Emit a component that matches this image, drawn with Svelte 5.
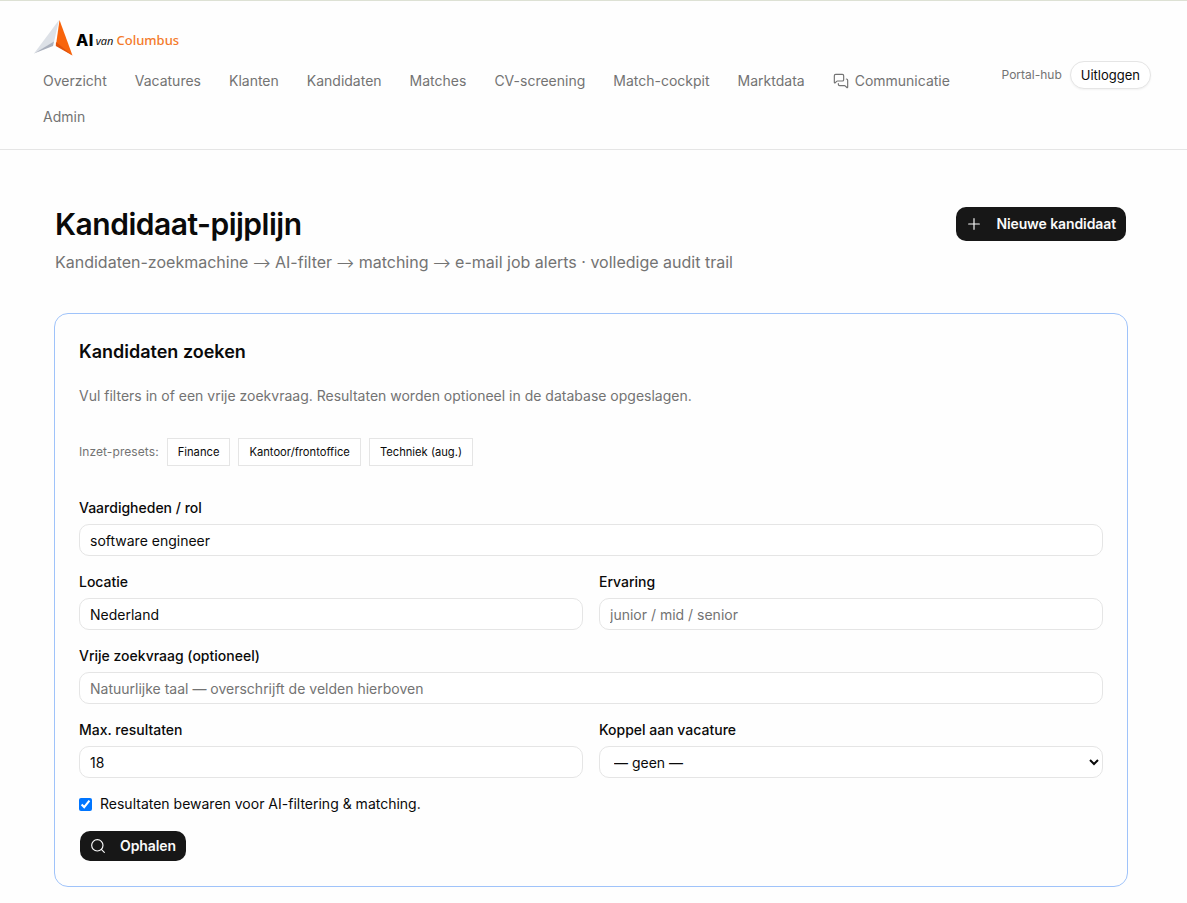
<script>
  const navItems = [
    'Overzicht',
    'Vacatures',
    'Klanten',
    'Kandidaten',
    'Matches',
    'CV-screening',
    'Match-cockpit',
    'Marktdata',
    'Communicatie',
    'Admin'
  ];

  const steps = [
    'Kandidaten-zoekmachine',
    'AI-filter',
    'matching',
    'e-mail job alerts · volledige audit trail'
  ];

  const presets = [
    { label: 'Finance', skills: 'finance' },
    { label: 'Kantoor/frontoffice', skills: 'frontoffice' },
    { label: 'Techniek (aug.)', skills: 'techniek' }
  ];

  let skills = 'software engineer';
  let location = 'Nederland';
  let experience = '';
  let query = '';
  let limit = 18;
  let vacancy = '';
  let persist = true;

  function applyPreset(preset) {
    skills = preset.skills;
  }
</script>

<header class="topbar">
  <div class="topbar-main">
    <a class="logo" href="#home">
      <svg width="40" height="36" viewBox="0 0 40 36">
        <path d="M26 0 1 33.500 21 22z" fill="#dde1e7" />
        <path d="M1 33.500 21 21.500 20 26z" fill="#a9afbc" />
        <path d="M26.500 0 39.500 35.500 23 25z" fill="#f8640c" />
        <path d="M23 22 39.500 35.500 22.800 26z" fill="#e0530c" />
      </svg>
      <span class="logo-ai">AI</span>
      <span class="logo-van">van</span>
      <span class="logo-name">Columbus</span>
    </a>
    <nav class="nav">
      {#each navItems as item}
        <a class="nav-link" href="#{item.toLowerCase()}">
          {#if item === 'Communicatie'}
            <svg class="icon" width="16" height="16" viewBox="0 0 24 24">
              <path d="M16 10a2 2 0 0 1-2 2H6.828a2 2 0 0 0-1.414.586l-2.202 2.202A.71.71 0 0 1 2 14.286V4a2 2 0 0 1 2-2h10a2 2 0 0 1 2 2z" />
              <path d="M20 9a2 2 0 0 1 2 2v10.286a.71.71 0 0 1-1.212.502l-2.202-2.202A2 2 0 0 0 17.172 19H10a2 2 0 0 1-2-2v-1" />
            </svg>
          {/if}
          {item}
        </a>
      {/each}
    </nav>
  </div>
  <div class="account">
    <a class="portal" href="#portal">Portal-hub</a>
    <button class="logout">Uitloggen</button>
  </div>
</header>

<main class="page">
  <div class="page-head">
    <div>
      <h1>Kandidaat-pijplijn</h1>
      <p class="subtitle">
        {#each steps as step, i}{#if i > 0}{' '}<span class="arrow">→</span>{' '}{/if}{step}{/each}
      </p>
    </div>
    <button class="btn-dark btn-new">
      <svg class="icon" width="16" height="16" viewBox="0 0 24 24"><path d="M4 12h16M12 4v16" /></svg>
      Nieuwe kandidaat
    </button>
  </div>

  <section class="card">
    <h2>Kandidaten zoeken</h2>
    <p class="card-text">Vul filters in of een vrije zoekvraag. Resultaten worden optioneel in de database opgeslagen.</p>

    <div class="presets">
      <span>Inzet-presets:</span>
      {#each presets as preset}
        <button class="preset" on:click={() => applyPreset(preset)}>{preset.label}</button>
      {/each}
    </div>

    <form class="form" on:submit|preventDefault>
      <label class="field wide">
        <span>Vaardigheden / rol</span>
        <input type="text" bind:value={skills} />
      </label>
      <label class="field">
        <span>Locatie</span>
        <input type="text" bind:value={location} />
      </label>
      <label class="field">
        <span>Ervaring</span>
        <input type="text" placeholder="junior / mid / senior" bind:value={experience} />
      </label>
      <label class="field wide">
        <span>Vrije zoekvraag (optioneel)</span>
        <input type="text" placeholder="Natuurlijke taal — overschrijft de velden hierboven" bind:value={query} />
      </label>
      <label class="field">
        <span>Max. resultaten</span>
        <input type="number" min="1" bind:value={limit} />
      </label>
      <label class="field">
        <span>Koppel aan vacature</span>
        <select bind:value={vacancy}>
          <option value="">— geen —</option>
        </select>
      </label>
      <label class="check wide">
        <input type="checkbox" bind:checked={persist} />
        <span>Resultaten bewaren voor AI-filtering &amp; matching.</span>
      </label>
      <button class="btn-dark btn-search" type="submit">
        <svg class="icon" width="16" height="16" viewBox="0 0 24 24"><circle cx="11" cy="11" r="8.500" /><path d="m21.500 21.500-4.500-4.500" /></svg>
        Ophalen
      </button>
    </form>
  </section>
</main>

<style>
  :global(body) {
    background: #fefefe;
    color: #0a0a0a;
    font-family: Inter, sans-serif;
    font-size: 14px;
    line-height: 20px;
  }
  a {
    color: inherit;
    text-decoration: none;
  }
  button,
  input,
  select {
    font: inherit;
    color: inherit;
  }
  .icon {
    fill: none;
    stroke: currentColor;
    stroke-width: 1.75;
    stroke-linecap: round;
    stroke-linejoin: round;
    flex-shrink: 0;
  }

  .topbar {
    display: flex;
    justify-content: space-between;
    align-items: center;
    box-sizing: border-box;
    height: 150px;
    padding: 0 36px 0 33px;
    border-top: 1px solid #dde1d4;
    border-bottom: 1px solid #e5e5e5;
    background: #fefefe;
  }
  .topbar-main {
    width: 950px;
  }
  .logo {
    display: flex;
    align-items: center;
    height: 40px;
    line-height: 20px;
  }
  .logo-ai {
    margin: 4px 0 0 3px;
    font-size: 16px;
    font-weight: 800;
    letter-spacing: 0.4px;
    color: #000;
  }
  .logo-van {
    margin: 6px 0 0 2px;
    font-family: "Noto Sans", sans-serif;
    font-size: 11px;
    font-style: italic;
    color: #111;
  }
  .logo-name {
    margin: 4px 0 0 3px;
    font-family: "Noto Sans", sans-serif;
    font-size: 13px;
    font-weight: 500;
    color: #f47a2a;
  }
  .nav {
    display: flex;
    flex-wrap: wrap;
    gap: 4px 8px;
    margin-top: 7px;
  }
  .nav-link {
    display: flex;
    align-items: center;
    gap: 6px;
    padding: 6px 10px;
    color: #737373;
  }
  .account {
    display: flex;
    align-items: center;
    gap: 8px;
  }
  .portal {
    font-size: 12px;
    color: #737373;
  }
  .logout {
    box-sizing: border-box;
    height: 28px;
    padding: 0 10px;
    border: 1px solid #e5e5e5;
    border-radius: 14px;
    background: #fff;
    font-size: 13px;
    box-shadow: 0 1px 2px rgba(0, 0, 0, 0.05);
  }

  .page {
    padding: 54px 59px 16px 54px;
  }
  .page-head {
    display: flex;
    justify-content: space-between;
    align-items: flex-start;
    padding: 0 2px 0 1px;
    margin-bottom: 39px;
  }
  h1 {
    margin: 0;
    font-size: 30px;
    line-height: 40px;
    font-weight: 600;
    letter-spacing: -0.5px;
  }
  .subtitle {
    margin: 6px 0 0;
    font-size: 16px;
    line-height: 24px;
    color: #737373;
  }
  .arrow {
    font-family: "DejaVu Sans", sans-serif;
    font-size: 21px;
    font-weight: 200;
    line-height: 0;
    vertical-align: -2px;
  }
  .btn-dark {
    display: flex;
    align-items: center;
    justify-content: space-between;
    box-sizing: border-box;
    padding: 0 10px;
    border: 0;
    border-radius: 10px;
    background: #171717;
    color: #fafafa;
    font-weight: 600;
    letter-spacing: -0.1px;
  }
  .btn-new {
    width: 170px;
    height: 34px;
    margin-top: 3px;
  }
  .btn-search {
    width: 106px;
    height: 30px;
    margin: 1px 0 0 1px;
  }

  .card {
    box-sizing: border-box;
    height: 574px;
    padding: 24px;
    border: 1px solid #9fc3fa;
    border-radius: 14px;
    background: #fefefe;
  }
  h2 {
    margin: 0;
    font-size: 18px;
    line-height: 28px;
    font-weight: 600;
  }
  .card-text {
    margin: 20px 0 32px;
    color: #737373;
  }
  .presets {
    display: flex;
    align-items: center;
    gap: 8px;
    font-size: 12px;
    letter-spacing: 0.08px;
    color: #737373;
  }
  .preset {
    box-sizing: border-box;
    height: 28px;
    padding: 0 10px;
    border: 1px solid #e5e5e5;
    background: #fff;
    font-size: 11.2px;
    letter-spacing: 0;
    color: #0a0a0a;
  }
  .form {
    display: grid;
    grid-template-columns: 1fr 1fr;
    gap: 16px;
    margin-top: 32px;
  }
  .wide {
    grid-column: 1 / -1;
  }
  .field {
    display: flex;
    flex-direction: column;
    gap: 6px;
  }
  .field span {
    font-weight: 500;
  }
  .field input,
  .field select {
    box-sizing: border-box;
    width: 100%;
    height: 32px;
    padding: 0 10px;
    border: 1px solid #e5e5e5;
    border-radius: 10px;
    outline: 0;
    background: #fff;
  }
  .field select {
    padding-right: 0;
  }
  .field input::placeholder {
    color: #737373;
  }
  .check {
    display: flex;
    align-items: center;
    gap: 8px;
  }
  .check input {
    width: 13px;
    height: 13px;
    margin: 0;
  }
</style>
